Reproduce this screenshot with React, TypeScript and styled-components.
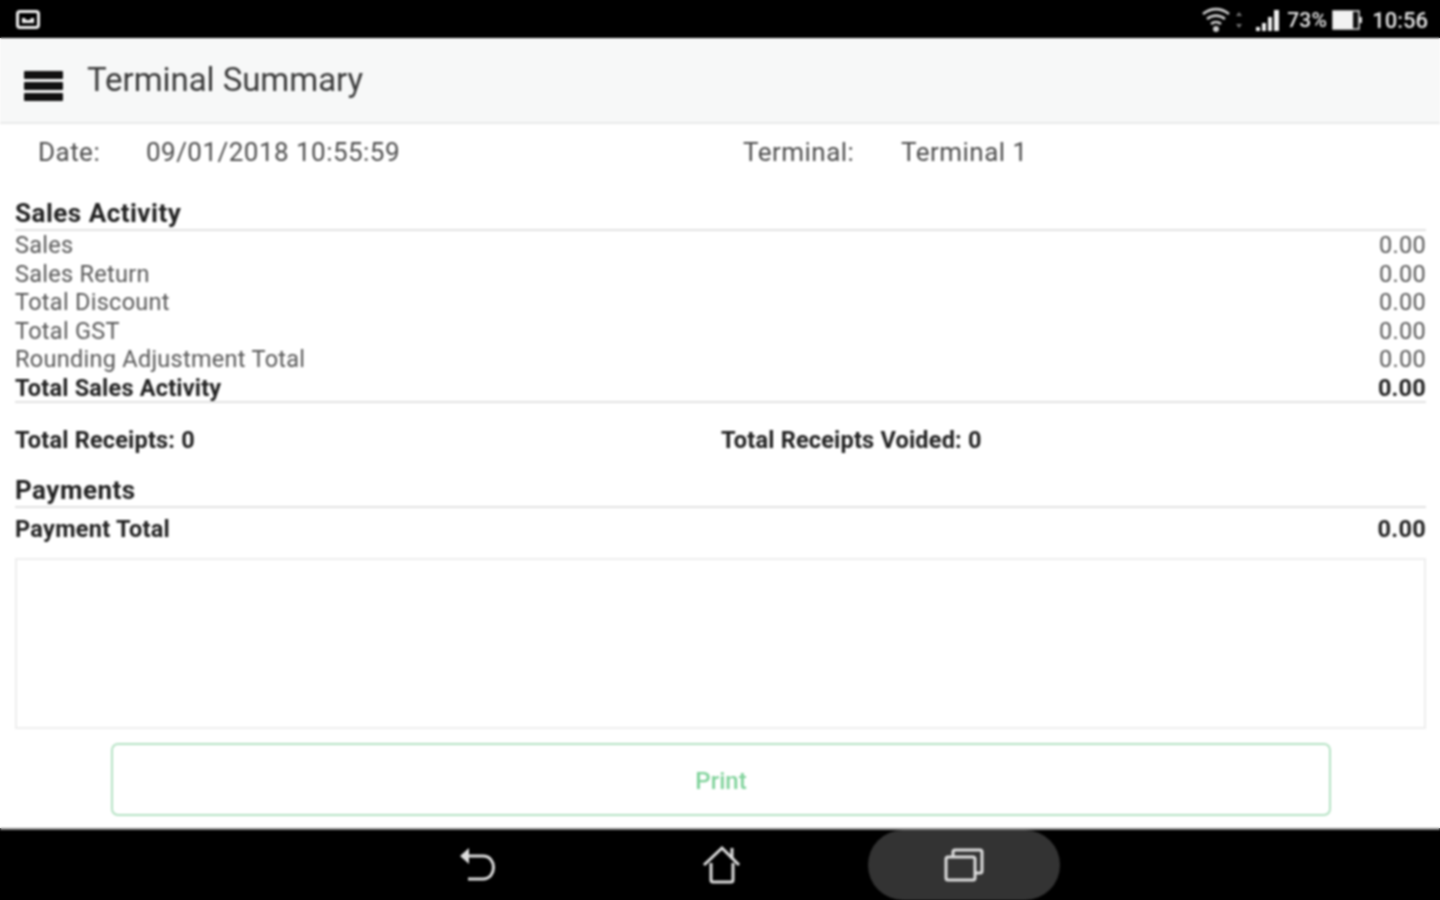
import React from "react";
import styled, { createGlobalStyle } from "styled-components";

const GlobalStyle = createGlobalStyle`
  html, body {
    margin: 0;
    padding: 0;
    height: 900px;
  }
  html {
    background: linear-gradient(#000 38px, #fff 38px, #fff 828px, #000 828px);
  }
  body {
    font-family: Roboto, "Liberation Sans", sans-serif;
  }
`;

const Screen = styled.div`
  width: 1440px;
  height: 900px;
  display: flex;
  flex-direction: column;
  overflow: hidden;
  background: #fff;
  filter: blur(0.8px);
`;

const StatusBar = styled.div`
  height: 38px;
  flex: none;
  background: #000;
  display: flex;
  align-items: center;
  justify-content: space-between;
  padding: 2px 12px 0 16px;
  color: #e4e4e4;
  box-sizing: border-box;
`;

const StatusRight = styled.div`
  display: flex;
  align-items: center;
  font-size: 22px;
  font-weight: 500;
`;

const Percent = styled.span`
  margin: 0 5px 0 5px;
  font-size: 21px;
  letter-spacing: 0.2px;
`;

const Clock = styled.span`
  margin-left: 8px;
`;

const Header = styled.header`
  height: 86px;
  flex: none;
  box-sizing: border-box;
  background: #f7f8f8;
  border-bottom: 2px solid #e9eaea;
  display: flex;
  align-items: center;
  padding: 0 0 2px 24px;
  gap: 24px;
`;

const Burger = styled.div`
  width: 39px;
  height: 30px;
  margin-top: 14px;
  display: flex;
  flex-direction: column;
  justify-content: space-between;
`;

const BurgerBar = styled.span`
  height: 8px;
  border-radius: 1px;
  background: #111;
`;

const Title = styled.h1`
  margin: 0;
  font-size: 33px;
  font-weight: 400;
  letter-spacing: -0.05px;
  color: #3a3a3a;
`;

const Content = styled.main`
  flex: 1;
  box-sizing: border-box;
  padding: 0 14px 0 15px;
  display: flex;
  flex-direction: column;
`;

const InfoRow = styled.div`
  height: 56px;
  flex: none;
  display: grid;
  grid-template-columns: 108px 597px 158px 1fr;
  align-items: center;
  padding: 0 0 0 23px;
  font-size: 26px;
  letter-spacing: 0.47px;
  color: #4e4e4e;
`;

const SectionTitle = styled.h2`
  margin: 0;
  font-size: 26px;
  line-height: 30px;
  font-weight: 700;
  letter-spacing: 0.5px;
  color: #222;
  border-bottom: 2px solid #e2e2e2;
  padding-bottom: 1px;
`;

const SalesTitle = styled(SectionTitle)`
  margin-top: 18px;
`;

const Row = styled.div<{ $strong?: boolean }>`
  display: flex;
  justify-content: space-between;
  height: 28.5px;
  line-height: 28.5px;
  font-size: 23.5px;
  letter-spacing: ${(p) => (p.$strong ? 0.3 : 0.28)}px;
  font-weight: ${(p) => (p.$strong ? 700 : 400)};
  color: ${(p) => (p.$strong ? "#222" : "#585858")};
`;

const TotalRow = styled(Row)`
  border-bottom: 2px solid #e2e2e2;
  height: 27px;
  letter-spacing: 0.2px;
`;

const ReceiptRow = styled.div`
  display: grid;
  grid-template-columns: 706px 1fr;
  margin-top: 23px;
  height: 28px;
  line-height: 28px;
  font-size: 23.5px;
  font-weight: 700;
  letter-spacing: 0.2px;
  color: #222;
`;

const PaymentsTitle = styled(SectionTitle)`
  margin-top: 21px;
`;

const PaymentRow = styled(Row)`
  margin-top: 7px;
`;

const NotesBox = styled.div`
  height: 171px;
  flex: none;
  box-sizing: border-box;
  margin-top: 15px;
  border: 2px solid #eeeeee;
`;

const PrintButton = styled.button`
  display: block;
  flex: none;
  width: 1220px;
  height: 73px;
  margin: 14px 0 0 96px;
  padding: 2px 0 0;
  background: #fff;
  border: 2px solid #b4e2c3;
  border-radius: 7px;
  font-family: inherit;
  font-size: 24px;
  font-weight: 500;
  color: #7fd29a;
`;

const NavBar = styled.nav`
  height: 72px;
  flex: none;
  box-sizing: border-box;
  background: #000;
  border-top: 2px solid #8a8a8a;
  display: grid;
  grid-template-columns: 436px 84px 158px 84px 106px 192px 1fr;
  align-items: center;
`;

const NavIcon = styled.div<{ $shift?: number }>`
  display: flex;
  justify-content: center;
  align-items: center;
  transform: translate(${(p) => p.$shift ?? 0}px, -1px);
`;

const RecentsPill = styled.div`
  height: 70px;
  display: flex;
  justify-content: center;
  align-items: center;
  background: #333;
  border-radius: 44px;
`;

const rows = ["Sales", "Sales Return", "Total Discount", "Total GST", "Rounding Adjustment Total"];

const App: React.FC = () => (
  <>
    <GlobalStyle />
    <Screen>
      <StatusBar>
        <svg width="24" height="20" viewBox="0 0 24 20">
          <rect x="1.5" y="1.5" width="21" height="16" rx="2.5" fill="none" stroke="#eee" strokeWidth="3" />
          <path d="M6 13V8h3l1 2h4l1-2h3v5z" fill="#eee" />
        </svg>
        <StatusRight>
          <svg width="28" height="26" viewBox="0 0 28 26" fill="none" stroke="#ccc" strokeWidth="2.600">
            <path d="M1 7c8-6.500 18-6.500 26 0M5 12c5.500-4.500 12.500-4.500 18 0M9 17c3-2.500 7-2.500 10 0" />
            <circle cx="14" cy="22" r="3" fill="#ccc" stroke="none" />
          </svg>
          <svg width="10" height="20" viewBox="0 0 10 20" fill="#777" style={{ margin: "0 12px 0 4px" }}>
            <path d="M5 2l3 4H2zM5 18l3-4H2z" />
          </svg>
          <svg width="26" height="24" viewBox="0 0 26 24" fill="#eee">
            <rect x="0" y="19" width="4" height="4" />
            <rect x="6" y="15" width="4" height="8" />
            <rect x="12" y="9" width="4" height="14" />
            <rect x="18" y="2" width="5" height="21" />
          </svg>
          <Percent>73%</Percent>
          <svg width="32" height="22" viewBox="0 0 32 22">
            <rect x="1" y="2" width="26" height="18" fill="#111" stroke="#ddd" strokeWidth="1.500" />
            <rect x="1" y="2" width="20" height="18" fill="#f2f2f2" />
            <rect x="27" y="8" width="3" height="6" fill="#ddd" />
          </svg>
          <Clock>10:56</Clock>
        </StatusRight>
      </StatusBar>

      <Header>
        <Burger>
          <BurgerBar />
          <BurgerBar />
          <BurgerBar />
        </Burger>
        <Title>Terminal Summary</Title>
      </Header>

      <Content>
        <InfoRow>
          <span>Date:</span>
          <span>09/01/2018 10:55:59</span>
          <span>Terminal:</span>
          <span>Terminal 1</span>
        </InfoRow>

        <SalesTitle>Sales Activity</SalesTitle>
        <div>
          {rows.map((label) => (
            <Row key={label}>
              <span>{label}</span>
              <span>0.00</span>
            </Row>
          ))}
          <TotalRow $strong>
            <span>Total Sales Activity</span>
            <span>0.00</span>
          </TotalRow>
        </div>

        <ReceiptRow>
          <span>Total Receipts: 0</span>
          <span>Total Receipts Voided: 0</span>
        </ReceiptRow>

        <PaymentsTitle>Payments</PaymentsTitle>
        <PaymentRow $strong>
          <span>Payment Total</span>
          <span>0.00</span>
        </PaymentRow>

        <NotesBox />
        <PrintButton>Print</PrintButton>
      </Content>

      <NavBar>
        <span />
        <NavIcon $shift={-1}>
          <svg width="40" height="36" viewBox="0 0 40 36" fill="none" stroke="#ddd" strokeWidth="3">
            <path d="M7 10h19c14 0 14 23 0 23H11" />
            <path d="M3 10l9-8v16z" fill="#ddd" stroke="none" />
          </svg>
        </NavIcon>
        <span />
        <NavIcon $shift={2}>
          <svg width="40" height="40" viewBox="0 0 40 40" fill="none" stroke="#ddd" strokeWidth="3">
            <path d="M2 21L20 4l17 17" />
            <path d="M9 19v17a2 2 0 0 0 2 2h18a2 2 0 0 0 2-2V19" />
            <path d="M30 4v11" />
          </svg>
        </NavIcon>
        <span />
        <RecentsPill>
          <svg width="42" height="36" viewBox="0 0 42 36" fill="none" stroke="#ddd" strokeWidth="3">
            <rect x="3" y="10" width="29" height="23" rx="2" />
            <path d="M10 10V5a2 2 0 0 1 2-2h25a2 2 0 0 1 2 2v19a2 2 0 0 1-2 2h-5" />
          </svg>
        </RecentsPill>
        <span />
      </NavBar>
    </Screen>
  </>
);

export default App;
